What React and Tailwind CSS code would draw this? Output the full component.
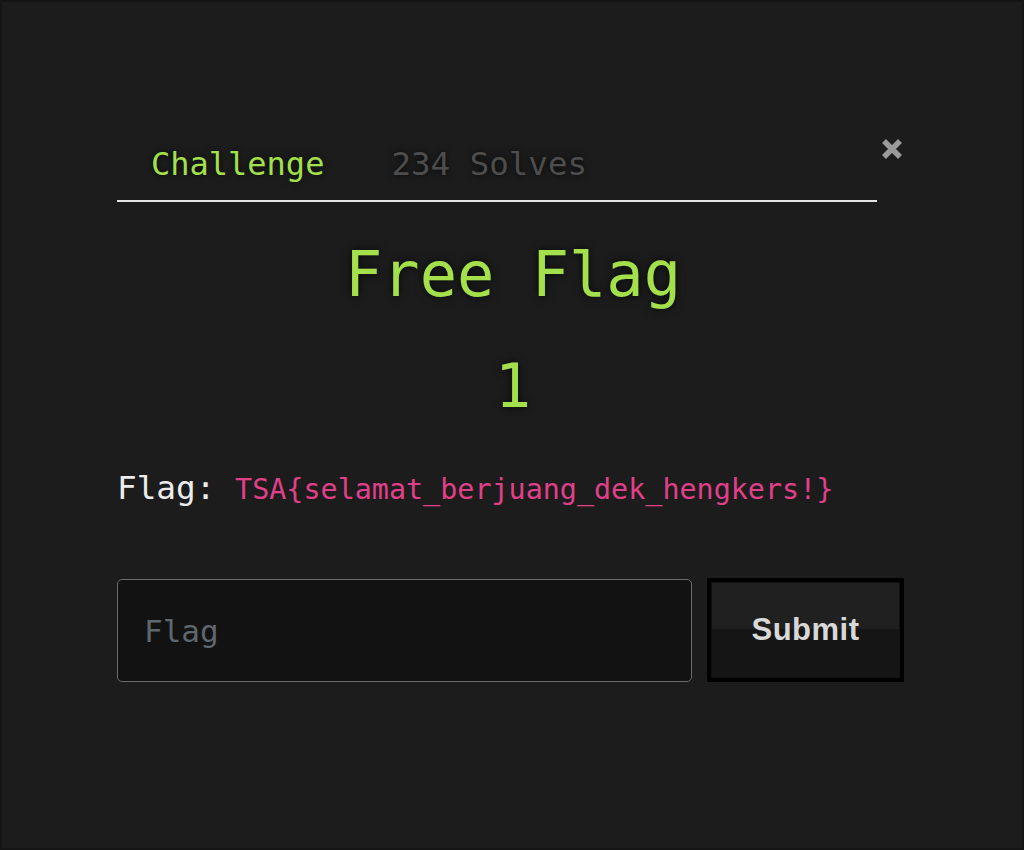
import React from 'react';

const mono = "font-['DejaVu_Sans_Mono',monospace]";

function CloseIcon() {
    return (
        <svg width="24" height="24" viewBox="0 0 24 24" className="block">
            <path d="M4 4 L20 20 M20 4 L4 20" stroke="#9a9a9a" strokeWidth="5.5" strokeLinecap="butt" />
        </svg>
    );
}

export default function App() {
    return (
        <div className="h-[850px] w-full bg-[#1c1c1c] border-2 border-[#151515] pt-[138px] pl-[115px]">
            <div className="w-[792px]">
                <div className="flex items-start gap-[3px]">
                    <div className={`w-[760px] flex border-b-2 border-[#e3e3e3] pb-[12px] ${mono} text-[32px] leading-[48px]`}>
                        <span className="px-[34px] text-[#a4e04c] [text-shadow:0_0_6px_rgba(0,0,0,0.8)]">Challenge</span>
                        <span className="px-[33px] text-[32.5px] text-[#4d4d4d] [text-shadow:0_0_6px_rgba(0,0,0,0.8)]">234 Solves</span>
                    </div>
                    <button className="-mt-[3px] p-0">
                        <CloseIcon />
                    </button>
                </div>

                <div className={`flex flex-col items-center ${mono} text-[#a4e04c] [text-shadow:0_0_8px_rgba(0,0,0,0.8)]`}>
                    <h1 className="mt-[36px] text-[62px] leading-[74px]">Free Flag</h1>
                    <h2 className="mt-[38px] text-[60px] leading-[72px]">1</h2>
                </div>

                <p className={`mt-[45px] ${mono} leading-[42px] whitespace-pre`}>
                    <span className="text-[32.7px] text-[#ececec]">Flag: </span>
                    <code className="text-[28.4px] text-[#e0408a] font-['DejaVu_Sans_Mono',monospace]">TSA{'{'}selamat_berjuang_dek_hengkers!{'}'}</code>
                </p>

                <div className="mt-[64px] flex gap-[15px]">
                    <input
                        placeholder="Flag"
                        className={`w-[575px] h-[103px] rounded-[5px] border border-[#6b6b6b] bg-[#121212] pl-[26px] ${mono} text-[31px] text-[#ddd] placeholder:text-[#5f676e] outline-none`}
                    />
                    <button className="w-[197px] h-[104px] -mt-[1px] border-4 border-black bg-[linear-gradient(#202020_0%,#202020_49%,#151515_49%,#151515_100%)] shadow-[inset_0_0_0_1px_#111] font-['Liberation_Sans',Arial,sans-serif] font-bold text-[31px] tracking-[0.5px] text-[#d8d8d8]">
                        Submit
                    </button>
                </div>
            </div>
        </div>
    );
}
